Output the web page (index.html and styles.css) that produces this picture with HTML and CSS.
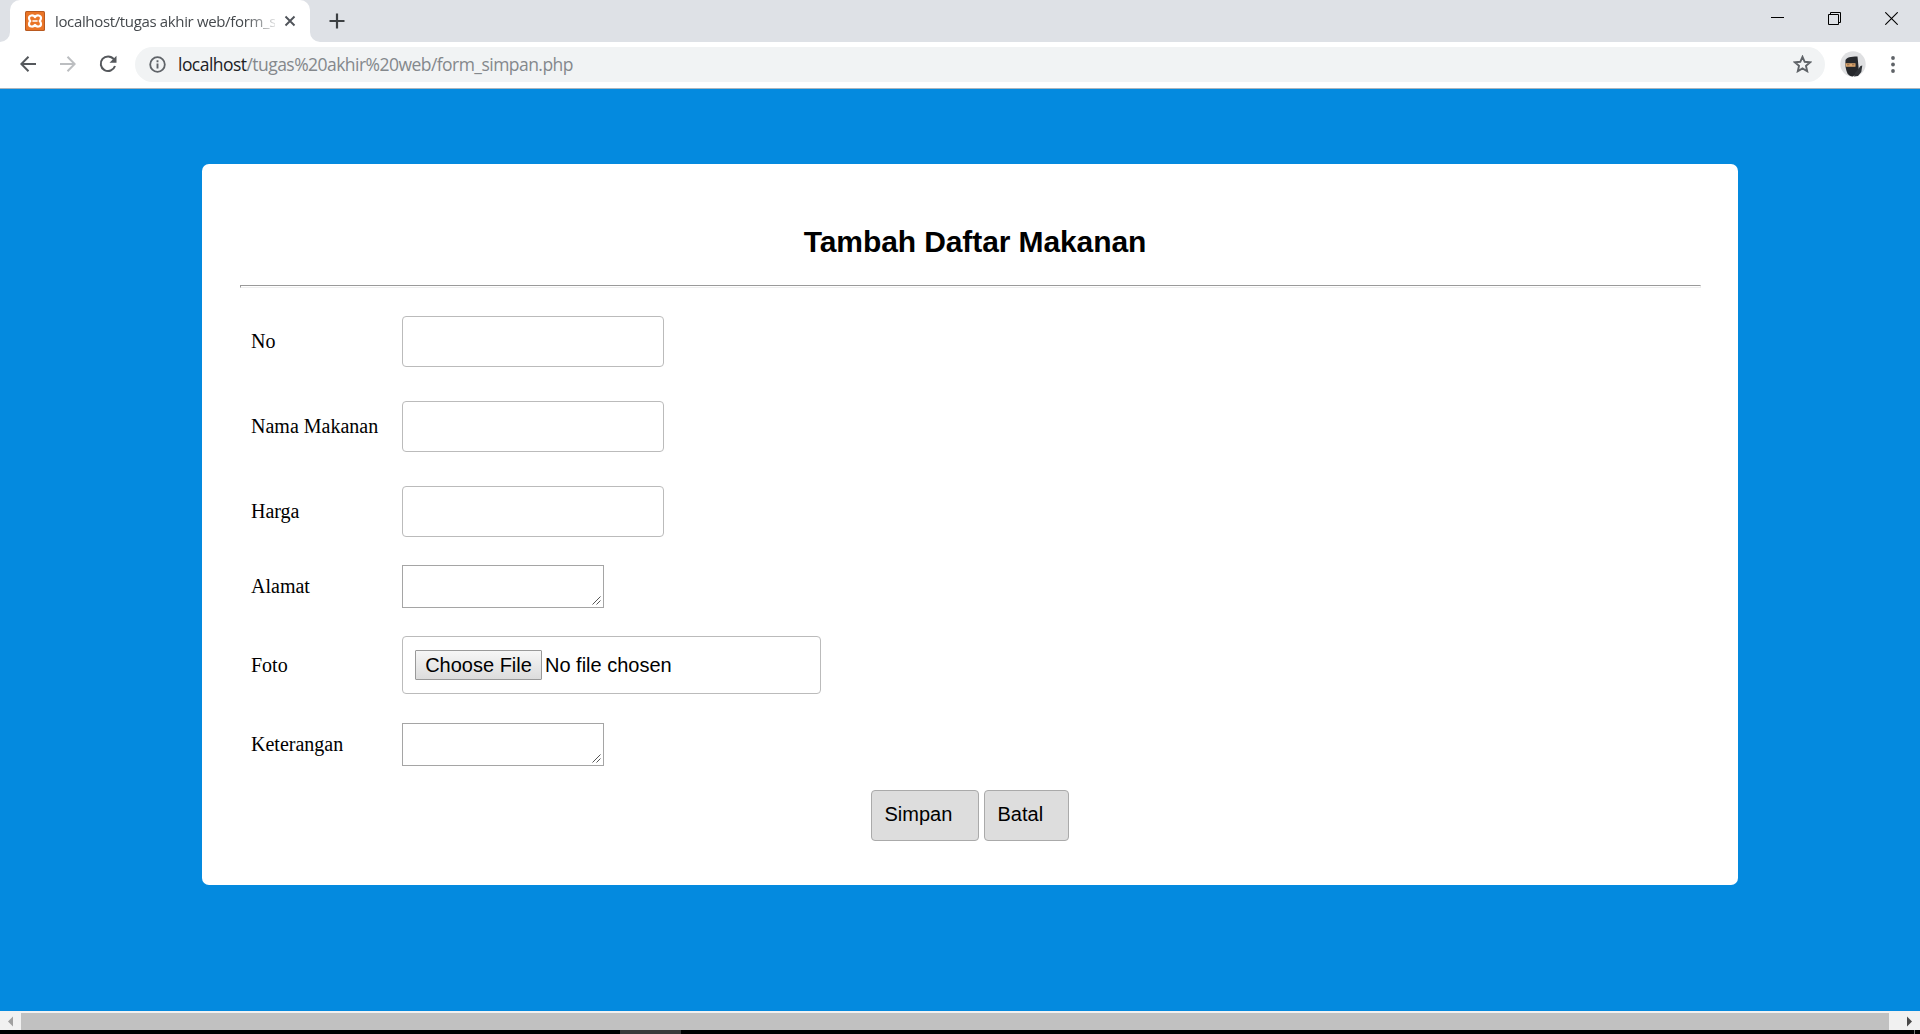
FILE: index.html
```html
<!DOCTYPE html>
<html lang="id">
<head>
<meta charset="utf-8">
<title>localhost/tugas akhir web/form_simpan.php</title>
<link rel="stylesheet" href="styles.css">
</head>
<body>
<header class="tabstrip">
  <div class="tab">
    <svg class="favicon" width="20" height="20" viewBox="0 0 20 20"><rect width="20" height="20" rx="1.500" fill="#b9591f"/><rect x="1" y="1" width="18" height="18" rx="1" fill="#ea7527"/><g fill="none" stroke="#fff" stroke-width="2.200" stroke-linejoin="round" stroke-linecap="round"><path d="M10 6C8.300 3.600 4 4 4 7c0 1.400.6 2.300 1.300 3-.7.700-1.300 1.600-1.300 3 0 3 4.300 3.400 6 1 1.700 2.400 6 2 6-1 0-1.400-.6-2.300-1.300-3 .7-.7 1.300-1.600 1.300-3 0-3-4.300-3.400-6-1z"/><path d="M8 10h4" stroke-width="1.600"/></g></svg>
    <span class="tab-title">localhost/tugas akhir web/form_s</span>
    <svg class="tab-close" width="12" height="12" viewBox="0 0 12 12"><path d="M1.500 1.500l9 9M10.500 1.500l-9 9" stroke="#50545a" stroke-width="1.900"/></svg>
  </div>
  <svg class="tab-curve" width="10" height="10" viewBox="0 0 10 10"><path d="M0 0a10 10 0 0 0 10 10H0z" fill="#fff"/></svg>
  <svg class="new-tab" width="16" height="16" viewBox="0 0 16 16"><path d="M8 .5v15M.5 8h15" stroke="#3c4043" stroke-width="2.200"/></svg>
  <div class="window-buttons">
    <svg width="13" height="13" viewBox="0 0 13 13"><path d="M0 5.500h13" stroke="#000"/></svg>
    <svg width="13" height="13" viewBox="0 0 13 13" fill="none" stroke="#000"><path d="M.5 2.500h10v10H.5zM2.500 2.500v-2h10v10h-2"/></svg>
    <svg width="13" height="13" viewBox="0 0 13 13"><path d="M.3.300l12.400 12.400M12.700.3L.3 12.700" stroke="#000" stroke-width="1.100"/></svg>
  </div>
</header>
<nav class="toolbar">
  <svg width="16" height="16" viewBox="0 0 16 16" fill="none" stroke="#55585c" stroke-width="2"><path d="M16 8H1.500M8.500.8L1.300 8l7.200 7.200"/></svg>
  <svg class="forward" width="16" height="16" viewBox="0 0 16 16" fill="none" stroke="#bcbec1" stroke-width="2"><path d="M0 8h14.500M7.500.8L14.700 8l-7.200 7.200"/></svg>
  <svg class="reload" width="18" height="18" viewBox="0 0 18 18"><path d="M14.800 4.200A7.300 7.300 0 1 0 16 11" fill="none" stroke="#55585c" stroke-width="2"/><path d="M17.500.8v7h-7z" fill="#55585c"/></svg>
  <div class="address">
    <svg width="17" height="17" viewBox="0 0 17 17"><circle cx="8.500" cy="8.500" r="7.300" fill="none" stroke="#5f6368" stroke-width="1.800"/><path d="M8.500 7.500v5M8.500 4.300v1.900" stroke="#5f6368" stroke-width="1.900"/></svg>
    <span class="url"><b>localhost</b>/tugas%20akhir%20web/form_simpan.php</span>
    <svg class="star" width="19" height="18" viewBox="0 0 19 18"><path d="M9.500 1.800l2.200 5 5.400.5-4.100 3.600 1.200 5.300-4.700-2.800-4.700 2.800L6 10.900 1.900 7.300l5.400-.5z" fill="none" stroke="#5f6368" stroke-width="1.900"/></svg>
  </div>
  <svg class="avatar" width="26" height="26" viewBox="0 0 26 26"><circle cx="13" cy="13" r="12.700" fill="#dfe0e2"/><path d="M5.500 9c1-2.500 5-3.500 12-3.500l1.200 12-2 5.500-4 2.500c-2 0-4-1.500-5-2.500-2-4-2.700-9-2.200-14z" fill="#26282c"/><path d="M15 22l4-5 1.500-2 1.800-.5-1 6.500-3.300 4-4 .5z" fill="#303338"/><path d="M5.300 12.200h10.200v3.500H6z" fill="#dfa970"/><path d="M7 13.800h2.500m2.500 0h2.500" stroke="#8a6444" stroke-width="1"/></svg>
  <svg class="menu" width="4" height="17" viewBox="0 0 4 17" fill="#5f6368"><circle cx="2" cy="2" r="1.900"/><circle cx="2" cy="8.500" r="1.900"/><circle cx="2" cy="15" r="1.900"/></svg>
</nav>
<main class="page">
  <form class="card">
    <h1 class="title">Tambah Daftar Makanan</h1>
    <hr class="rule">
    <div class="fields">
      <label for="no">No</label><input id="no" class="text-input" type="text">
      <label for="nama">Nama Makanan</label><input id="nama" class="text-input" type="text">
      <label for="harga">Harga</label><input id="harga" class="text-input" type="text">
      <label>Alamat</label>
      <div class="textarea"><svg width="9" height="9" viewBox="0 0 9 9"><path d="M.5 8.500l8-8M4.500 8.500l4-4" stroke="#555"/></svg></div>
      <label>Foto</label>
      <div class="file"><button class="choose" type="button">Choose File</button><span>No file chosen</span></div>
      <label>Keterangan</label>
      <div class="textarea"><svg width="9" height="9" viewBox="0 0 9 9"><path d="M.5 8.500l8-8M4.500 8.500l4-4" stroke="#555"/></svg></div>
    </div>
    <div class="actions">
      <button class="action save" type="button">Simpan</button>
      <button class="action cancel" type="button">Batal</button>
    </div>
  </form>
</main>
<div class="scrollbar">
  <svg width="21" height="17" viewBox="0 0 21 17"><path d="M13 3.500v10L8 8.500z" fill="#a0a0a0"/></svg>
  <div class="thumb"></div>
  <svg width="31" height="17" viewBox="0 0 31 17"><path d="M18 3.500v10l5-5z" fill="#484848"/></svg>
</div>
<footer class="taskbar"><div class="task"></div><div class="peek"></div></footer>
</body>
</html>
```
FILE: styles.css
```css
* { box-sizing: border-box; }
body {
  margin: 0;
  height: 1034px;
  display: flex;
  flex-direction: column;
  overflow: hidden;
  background: #fff;
}
svg { display: block; flex: none; }

.tabstrip {
  display: flex;
  height: 42px;
  background: linear-gradient(#fff, #fff) 0 32px / 10px 10px no-repeat, #dee1e6;
}
.tabstrip::before {
  content: "";
  width: 10px;
  height: 42px;
  background: #dee1e6;
  border-bottom-right-radius: 10px;
}
.tab {
  display: flex;
  align-items: center;
  width: 300px;
  padding-left: 15px;
  background: #fff;
  border-radius: 10px 10px 0 0;
}
.tab-title {
  width: 220px;
  margin-left: 10px;
  white-space: nowrap;
  font: 15px "Open Sans", sans-serif;
  letter-spacing: -0.35px;
  color: #45494d;
  -webkit-mask-image: linear-gradient(to right, #000 190px, transparent 226px);
  mask-image: linear-gradient(to right, #000 190px, transparent 226px);
}
.tab-close { margin-left: 9px; }
.tab-curve { align-self: flex-end; }
.new-tab { margin: 13px 0 0 9px; }
.window-buttons {
  display: flex;
  gap: 44px;
  margin: 12px 22px 0 auto;
}

.toolbar {
  display: flex;
  align-items: center;
  height: 47px;
  padding: 0 25px 2px 20px;
  border-bottom: 1px solid #a9b4bd;
}
.forward { margin-left: 24px; }
.reload { margin-left: 23px; }
.address {
  display: flex;
  align-items: center;
  flex: 1;
  height: 35px;
  margin-left: 18px;
  padding: 0 13px 0 14px;
  background: #f1f3f4;
  border-radius: 18px;
}
.url {
  margin-left: 12px;
  font: 17.5px "Open Sans", sans-serif;
  letter-spacing: -0.54px;
  color: #84888c;
}
.url b { font-weight: 400; color: #202124; }
.star { margin-left: auto; }
.avatar { margin-left: 15px; }
.menu { margin-left: 25px; }

.page {
  height: 922px;
  padding: 75px 182px 0 202px;
  background: #048adf;
}
.card {
  height: 721px;
  padding: 58px 37px 0 38px;
  background: #fff;
  border-radius: 7px;
}
.title {
  margin: 0;
  padding-left: 9px;
  font: bold 30px/40px "Liberation Sans", Arial, sans-serif;
  letter-spacing: -0.1px;
  text-align: center;
}
.rule {
  margin: 23px 0 0;
  height: 3px;
  border: 1px solid;
  border-color: #9a9a9a #eee #eee #9a9a9a;
}
.fields {
  display: grid;
  grid-template-columns: 151px auto;
  grid-template-rows: 63px 63px 63px 43px 70px 45px;
  row-gap: 22px;
  justify-content: start;
  align-items: center;
  margin-top: 22px;
  padding-left: 11px;
  font: 20px "Liberation Serif", "Times New Roman", serif;
}
.text-input {
  width: 262px;
  height: 51px;
  padding: 12px;
  background: #fff;
  border: 1px solid #bbb;
  border-radius: 4px;
}
.textarea {
  display: flex;
  justify-content: flex-end;
  align-items: flex-end;
  width: 202px;
  height: 43px;
  padding: 2px;
  border: 1px solid #a5a5a5;
}
.file {
  display: flex;
  align-items: center;
  gap: 3px;
  width: 419px;
  height: 58px;
  padding-left: 12px;
  border: 1px solid #bbb;
  border-radius: 4px;
  font: 20px "Liberation Sans", Arial, sans-serif;
}
.choose {
  width: 127px;
  height: 30px;
  padding: 0;
  border: 1px solid #999;
  border-radius: 1px;
  background: linear-gradient(#f6f6f6, #dcdcdc);
  font: inherit;
  white-space: nowrap;
}
.actions {
  display: flex;
  justify-content: center;
  gap: 5px;
  margin-top: 23px;
  padding-right: 2px;
}
.action {
  height: 51px;
  padding: 0 12px 2px 13px;
  border: 1px solid #aaa;
  border-radius: 4px;
  background: #ddd;
  color: #000;
  font: 20px "Liberation Sans", Arial, sans-serif;
  text-align: left;
}
.save { width: 108px; }
.cancel { width: 85px; }

.scrollbar {
  display: flex;
  height: 19px;
  padding-top: 2px;
  background: #f1f1f1;
}
.thumb { flex: 1; background: #c1c1c1; }
.taskbar {
  display: flex;
  height: 4px;
  padding: 0 5px 0 620px;
  justify-content: space-between;
  background: #000;
}
.task { width: 61px; background: #3a3a3a; }
.peek { width: 1px; background: #777; }
```
